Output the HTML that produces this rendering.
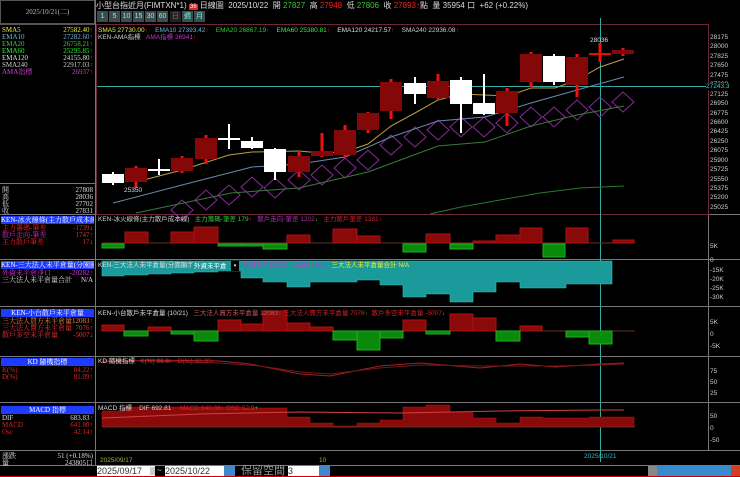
<!DOCTYPE html>
<html><head><meta charset="utf-8"><style>
*{margin:0;padding:0;box-sizing:border-box}
body{width:740px;height:477px;background:#000;overflow:hidden;position:relative;font-family:"Liberation Sans","Noto Sans CJK TC",sans-serif;color:#ddd}
.t{position:absolute;white-space:nowrap;font-size:7px;line-height:7px}
.s{font-family:"Liberation Serif","Noto Serif CJK SC",serif}
.hd{position:absolute;left:1px;width:93px;height:8px;background:#1e3cff;color:#fff;font-size:7px;line-height:8px;text-align:center;white-space:nowrap;overflow:hidden}
.r{position:absolute;left:2px;width:91px;font-size:7px;line-height:7px;white-space:nowrap}
.r b{float:right;font-weight:normal}
.btn{position:absolute;top:11px;height:11px;width:11px;background:#3c4b50;color:#7fd;font-size:7px;line-height:11px;text-align:center}
</style></head><body>
<svg width="740" height="477" style="position:absolute;left:0;top:0">
<!-- frames -->
<rect x="0.5" y="0.5" width="94" height="23" fill="none" stroke="#555"/>
<line x1="95.5" y1="0" x2="95.5" y2="466" stroke="#777"/>
<line x1="0" y1="24.5" x2="95" y2="24.5" stroke="#555"/>
<line x1="0" y1="183.5" x2="95" y2="183.5" stroke="#777"/>
<g stroke="#777">
<line x1="0" y1="214.5" x2="740" y2="214.5"/>
<line x1="0" y1="259.5" x2="740" y2="259.5"/>
<line x1="0" y1="306.5" x2="740" y2="306.5"/>
<line x1="0" y1="356.5" x2="740" y2="356.5"/>
<line x1="0" y1="402.5" x2="740" y2="402.5"/>
<line x1="0" y1="450.5" x2="740" y2="450.5"/>
<line x1="0" y1="465.5" x2="740" y2="465.5"/>
<line x1="708.5" y1="214" x2="708.5" y2="450"/>
</g>
<rect x="96.5" y="24.5" width="612" height="190" fill="none" stroke="#6a2838"/>
<line x1="0" y1="476.5" x2="740" y2="476.5" stroke="#c00"/>
<!-- crosshair -->
<line x1="600.5" y1="18" x2="600.5" y2="462" stroke="#3aa" stroke-width="1"/>
<line x1="97" y1="86.5" x2="708" y2="86.5" stroke="#3aa"/>
<!-- diamonds -->
<g fill="none" stroke="#8a2a9a" stroke-width="1">
<path d="M171 210l11-10 11 10-11 10z"/><path d="M195 200l11-10 11 10-11 10z"/><path d="M218 195l11-10 11 10-11 10z"/><path d="M241 187l11-10 11 10-11 10z"/><path d="M264 188l11-10 11 10-11 10z"/><path d="M288 180l11-10 11 10-11 10z"/><path d="M311 175l11-10 11 10-11 10z"/><path d="M334 168l11-10 11 10-11 10z"/><path d="M357 160l11-10 11 10-11 10z"/><path d="M380 145l11-10 11 10-11 10z"/><path d="M404 137l11-10 11 10-11 10z"/><path d="M427 130l11-10 11 10-11 10z"/><path d="M450 127l11-10 11 10-11 10z"/><path d="M473 127l11-10 11 10-11 10z"/><path d="M496 123l11-10 11 10-11 10z"/><path d="M520 117l11-10 11 10-11 10z"/><path d="M543 117l11-10 11 10-11 10z"/><path d="M566 110l11-10 11 10-11 10z"/><path d="M589 107l11-10 11 10-11 10z"/><path d="M612 102l11-10 11 10-11 10z"/>
</g>
<!-- MAs -->
<polyline fill="none" stroke="#2a7a2a" points="430,214 461,207 500,200 540,193 580,188 624,186"/>
<polyline fill="none" stroke="#3a7a3a" points="136,213 231,193 299,188 368,172 438,146 485,142 531,126 577,115 624,106"/>
<polyline fill="none" stroke="#6a8aa8" points="113,203 182,185 252,167 299,164 345,157 391,137 438,121 485,117 531,103 577,90 624,77"/>
<polyline fill="none" stroke="#b8a040" points="136,182 182,170 229,155 252,152 299,151 321,153 345,152 368,144 391,126 415,113 438,100 461,94 485,95 508,96 531,88 555,88 577,80 600,67 624,59"/>
<!-- candles -->
<g stroke-width="3" stroke="#f01010">
<line x1="136" y1="166" x2="136" y2="188"/><line x1="182" y1="156" x2="182" y2="173"/><line x1="206" y1="135" x2="206" y2="164"/><line x1="299" y1="151" x2="299" y2="177"/><line x1="322" y1="133" x2="322" y2="157"/><line x1="345" y1="125" x2="345" y2="157"/><line x1="368" y1="112" x2="368" y2="133"/><line x1="391" y1="79" x2="391" y2="119"/><line x1="438" y1="74" x2="438" y2="100"/><line x1="507" y1="88" x2="507" y2="126"/><line x1="531" y1="52" x2="531" y2="87"/><line x1="577" y1="54" x2="577" y2="97"/><line x1="600" y1="43" x2="600" y2="62"/><line x1="623" y1="48" x2="623" y2="56"/>
</g>
<g fill="#850808">
<rect x="125" y="168" width="22" height="14"/><rect x="171" y="158" width="22" height="13"/><rect x="195" y="138" width="22" height="21"/><rect x="288" y="156" width="22" height="16"/><rect x="311" y="151" width="22" height="5"/><rect x="334" y="130" width="22" height="25"/><rect x="357" y="113" width="22" height="17"/><rect x="380" y="82" width="22" height="29"/><rect x="427" y="81" width="22" height="17"/><rect x="496" y="91" width="22" height="22"/><rect x="520" y="54" width="22" height="28"/><rect x="566" y="57" width="22" height="28"/><rect x="589" y="53" width="22" height="2" fill="#e01010"/><rect x="612" y="50" width="22" height="4"/>
</g>
<g stroke-width="2" stroke="#fff">
<line x1="113" y1="172" x2="113" y2="185"/><line x1="159" y1="159" x2="159" y2="175"/><line x1="229" y1="124" x2="229" y2="149"/><line x1="252" y1="137" x2="252" y2="149"/><line x1="275" y1="148" x2="275" y2="180"/><line x1="415" y1="77" x2="415" y2="104"/><line x1="461" y1="77" x2="461" y2="133"/><line x1="484" y1="74" x2="484" y2="115"/><line x1="554" y1="54" x2="554" y2="85"/>
</g>
<g fill="#fff">
<rect x="102" y="174" width="22" height="9"/><rect x="148" y="169" width="22" height="2"/><rect x="218" y="138" width="22" height="2"/><rect x="241" y="141" width="22" height="7"/><rect x="264" y="149" width="22" height="23"/><rect x="404" y="83" width="22" height="11"/><rect x="450" y="80" width="22" height="24"/><rect x="473" y="103" width="22" height="11"/><rect x="543" y="56" width="22" height="26"/>
</g>
<!-- volume panel -->
<line x1="102" y1="243" x2="635" y2="243" stroke="#6a3020"/>
<g fill="#8a0a0a" stroke="#b01010">
<rect x="125" y="232" width="23" height="11"/><rect x="171" y="232" width="23" height="11"/><rect x="194" y="227" width="24" height="16"/><rect x="287" y="235" width="23" height="8"/><rect x="333" y="229" width="24" height="14"/><rect x="357" y="236" width="23" height="7"/><rect x="426" y="234" width="24" height="9"/><rect x="473" y="241" width="23" height="2"/><rect x="496" y="235" width="24" height="8"/><rect x="520" y="228" width="22" height="15"/><rect x="566" y="228" width="22" height="15"/><rect x="613" y="240" width="21" height="3"/>
</g>
<g fill="#0a8a0a" stroke="#20b020">
<rect x="102" y="244" width="22" height="4"/><rect x="218" y="244" width="23" height="2"/><rect x="241" y="244" width="22" height="2"/><rect x="263" y="244" width="24" height="5"/><rect x="403" y="244" width="23" height="8"/><rect x="450" y="244" width="23" height="5"/><rect x="543" y="244" width="22" height="13"/>
</g>
<!-- cyan panel -->
<g fill="#1a9a9a" stroke="#30c0c0" stroke-width=".6">
<path d="M102 261V276H124V275H148V274H171V273H194V272H218V271H241V278H263V282H287V287H310V282H333V282H357V280H380V285H403V297H426V294H450V302H473V292H496V282H520V288H543V288H566V284H589V284H612V261Z"/>
</g>
<!-- small panel -->
<line x1="102" y1="331" x2="635" y2="331" stroke="#6a3020"/>
<g fill="#8a0a0a" stroke="#b01010">
<rect x="102" y="325" width="22" height="6"/><rect x="148" y="327" width="23" height="4"/><rect x="218" y="320" width="23" height="11"/><rect x="241" y="324" width="22" height="7"/><rect x="263" y="311" width="24" height="20"/><rect x="287" y="323" width="23" height="8"/><rect x="310" y="327" width="23" height="4"/><rect x="403" y="320" width="23" height="11"/><rect x="450" y="314" width="23" height="17"/><rect x="473" y="318" width="23" height="13"/><rect x="520" y="326" width="22" height="5"/>
</g>
<g fill="#0a8a0a" stroke="#20b020">
<rect x="124" y="331" width="24" height="5"/><rect x="171" y="331" width="23" height="3"/><rect x="194" y="331" width="24" height="10"/><rect x="333" y="331" width="24" height="9"/><rect x="357" y="331" width="23" height="19"/><rect x="380" y="331" width="23" height="7"/><rect x="426" y="331" width="24" height="3"/><rect x="496" y="331" width="24" height="10"/><rect x="566" y="331" width="23" height="6"/><rect x="589" y="331" width="23" height="13"/>
</g>
<!-- KD -->
<polyline fill="none" stroke="#a02020" points="102,362 150,360 220,361 250,364 300,374 330,376 380,366 420,363 480,368 520,364 555,367 600,364 624,363"/>
<polyline fill="none" stroke="#701818" points="102,360 150,361 220,363 260,366 300,372 330,374 380,368 420,365 480,366 520,366 555,366 600,365 624,364"/>
<!-- MACD -->
<path d="M102 427V411H124V407H218V407H241V408H263V408H287V417H310V423H333V426H357V423H380V420H403V407H426V405H450V412H473V418H496V423H520V417H543V418H589V417H634V427Z" fill="#8a0a0a" stroke="#b01010" stroke-width=".6"/>
<polyline fill="none" stroke="#d04040" points="102,418 200,414 300,412 400,413 500,411 600,410 624,410"/>
<line x1="102" y1="427" x2="635" y2="427" stroke="#6a3020"/>
</svg>

<!-- left header -->
<div class="t s" style="left:0;top:9px;width:95px;text-align:center;color:#bbb">2025/10/21(二)</div>
<div class="r s" style="top:27px;color:#ee4">SMA5<b>27582.40<span style="color:#f22">↑</span></b></div>
<div class="r s" style="top:34px;color:#6ab4e0">EMA10<b>27282.60<span style="color:#f22">↑</span></b></div>
<div class="r s" style="top:41px;color:#3c3">EMA20<b>26758.21<span style="color:#f22">↑</span></b></div>
<div class="r s" style="top:48px;color:#3e3">EMA60<b>25295.85<span style="color:#f22">↑</span></b></div>
<div class="r s" style="top:55px;color:#ddd">EMA120<b>24155.80<span style="color:#f22">↑</span></b></div>
<div class="r s" style="top:62px;color:#ccc">SMA240<b>22917.03<span style="color:#f22">↑</span></b></div>
<div class="r s" style="top:69px;color:#d040d0">AMA指標<b>26937<span style="color:#f22">↑</span></b></div>
<div class="r s" style="top:187px;color:#ddd">開<b>27808</b></div>
<div class="r s" style="top:194px;color:#ddd">高<b>28036</b></div>
<div class="r s" style="top:201px;color:#ddd">低<b>27702</b></div>
<div class="r s" style="top:208px;color:#ddd">收<b>27831</b></div>
<div class="hd s" style="top:216px">KEN-冰火線條(主力散戶成本線)</div>
<div class="r s" style="top:225px;color:#e22">主力籌碼-筆差<b style="color:#e22">-1739<span style="color:#2c2">↓</span></b></div>
<div class="r s" style="top:232px;color:#c3c">散戶走向-筆差<b style="color:#c33">1747<span style="color:#f22">↑</span></b></div>
<div class="r s" style="top:239px;color:#e22">主力散戶筆差<b>17<span style="color:#2c2">↓</span></b></div>
<div class="hd s" style="top:261px">KEN-三大法人未平倉量(分園顯示)</div>
<div class="r s" style="top:270px;color:#d3d">外資未平倉淨口<b style="color:#d3d">-20282<span style="color:#f22">↑</span></b></div>
<div class="r s" style="top:277px;color:#ddd">三大法人未平倉量合計<b>N/A</b></div>
<div class="hd s" style="top:309px">KEN-小台散戶未平倉量</div>
<div class="r s" style="top:318px;color:#e84">三大法人買方未平倉量<b>12083<span style="color:#f22">↑</span></b></div>
<div class="r s" style="top:325px;color:#e33">三大法人賣方未平倉量<b>7076<span style="color:#f22">↑</span></b></div>
<div class="r s" style="top:332px;color:#e33">散戶多空未平倉量<b>-5007<span style="color:#2c2">↓</span></b></div>
<div class="hd s" style="top:358px">KD 隨機指標</div>
<div class="r s" style="top:367px;color:#d22">K(%)<b>84.22<span style="color:#f22">↑</span></b></div>
<div class="r s" style="top:374px;color:#d22">D(%)<b>81.09<span style="color:#f22">↑</span></b></div>
<div class="hd s" style="top:406px">MACD 指標</div>
<div class="r s" style="top:415px;color:#ddd">DIF<b>683.83<span style="color:#f22">↑</span></b></div>
<div class="r s" style="top:422px;color:#d22">MACD<b>641.80<span style="color:#f22">↑</span></b></div>
<div class="r s" style="top:429px;color:#d22">Osc<b>42.14<span style="color:#f22">↑</span></b></div>
<div class="r s" style="top:453px;color:#ddd">漲跌<b>51 (+0.18%)</b></div>
<div class="r s" style="top:460px;color:#ddd">量<b>243805口</b></div>

<!-- top bar -->
<div class="t" style="left:96px;top:2px;font-size:8px;line-height:8px;color:#ddd">小型台指近月(FIMTXN*1) <span style="background:#d22;color:#fff;font-size:6px;padding:0 1px">36</span> 日線圖 &nbsp;2025/10/22 &nbsp;開 <span style="color:#3c3">27827</span> &nbsp;高 <span style="color:#e22">27948</span> &nbsp;低 <span style="color:#3c3">27806</span> &nbsp;收 <span style="color:#e22">27893</span><span style="color:#e22">↑</span>點 &nbsp;量 35954 口 &nbsp;+62 (+0.22%)</div>
<div class="btn" style="left:97px">1</div><div class="btn" style="left:109px">5</div><div class="btn" style="left:121px">10</div><div class="btn" style="left:133px">15</div><div class="btn" style="left:145px">30</div><div class="btn" style="left:157px">60</div><div class="btn" style="left:170px;background:#222;color:#777">日</div><div class="btn" style="left:182px">週</div><div class="btn" style="left:194px">月</div>

<!-- main legend -->
<div class="t" style="left:98px;top:27px;font-size:6.5px"><span style="color:#ee4">SMA5 27730.00<span style="color:#f22">↑</span></span> &nbsp;&nbsp;&nbsp;<span style="color:#6ab4e0">EMA10 27393.42<span style="color:#f22">↑</span></span> &nbsp;&nbsp;&nbsp;<span style="color:#3c3">EMA20 26867.19<span style="color:#f22">↑</span></span> &nbsp;&nbsp;&nbsp;<span style="color:#3e3">EMA60 25380.81<span style="color:#f22">↑</span></span> &nbsp;&nbsp;&nbsp;<span style="color:#ddd">EMA120 24217.57<span style="color:#f22">↑</span></span> &nbsp;&nbsp;&nbsp;<span style="color:#ccc">SMA240 22936.08<span style="color:#f22">↑</span></span></div>
<div class="t" style="left:98px;top:34px;font-size:6.5px;color:#ccc">KEN-AMA指標 &nbsp;&nbsp;<span style="color:#c3c">AMA指標 26941<span style="color:#f22">↑</span></span></div>
<div class="t" style="left:590px;top:37px;font-size:6.5px;color:#ddd">28036</div>
<div class="t" style="left:124px;top:187px;font-size:6.5px;color:#ddd">25350</div>

<!-- price axis -->
<div class="t" style="left:710px;top:33px;font-size:6.5px;line-height:9.43px;color:#ccc">28175<br>28000<br>27825<br>27650<br>27475<br>27300<br>27125<br>26950<br>26775<br>26600<br>26425<br>26250<br>26075<br>25900<br>25725<br>25550<br>25375<br>25200<br>25025</div>
<div class="t" style="left:706px;top:83px;font-size:6.5px;color:#4cc;background:#000">27243.3</div>
<div class="t" style="left:710px;top:240px;font-size:6.5px;line-height:14px;color:#ccc">5K<br>0</div>
<div class="t" style="left:710px;top:266px;font-size:6.5px;line-height:9px;color:#ccc">-15K<br>-20K<br>-25K<br>-30K</div>
<div class="t" style="left:710px;top:317px;font-size:6.5px;line-height:12px;color:#ccc">5K<br>0<br>-5K</div>
<div class="t" style="left:710px;top:366px;font-size:6.5px;line-height:11px;color:#ccc">75<br>50<br>25</div>
<div class="t" style="left:710px;top:411px;font-size:6.5px;line-height:12px;color:#ccc">50<br>0<br>-50</div>

<!-- sub panel titles -->
<div class="t" style="left:98px;top:216px;font-size:6.5px;color:#ccc">KEN-冰火線條(主力散戶成本線) &nbsp;&nbsp;<span style="color:#3c3">主力籌碼-筆差 179</span><span style="color:#f22">↑</span> &nbsp;&nbsp;<span style="color:#a3a">散戶走向-筆差 1202</span><span style="color:#3c3">↓</span> &nbsp;&nbsp;<span style="color:#c22">主力散戶筆差 1381</span><span style="color:#f22">↑</span></div>
<div class="t" style="left:98px;top:262px;font-size:6.5px;color:#ddd">KEN-三大法人未平倉量(分園顯示)</div>
<div class="t" style="left:192px;top:263px;font-size:6.5px;line-height:8px;color:#fff;background:#1a9a9a;padding:0 2px">外資未平倉</div>
<div class="t" style="left:231px;top:261px;width:8px;height:10px;background:#000;color:#fff;font-size:5px;line-height:10px;text-align:center">▾</div>
<div class="t" style="left:243px;top:262px;font-size:6.5px"><span style="color:#c3c">外資未平倉淨口 -20282</span><span style="color:#f22">↑</span> <span style="color:#a3f">N/A</span> &nbsp;&nbsp;<span style="color:#ee3">三大法人未平倉量合計 N/A</span></div>
<div class="t" style="left:98px;top:310px;font-size:6.5px;color:#ddd">KEN-小台散戶未平倉量 (10/21) &nbsp;&nbsp;<span style="color:#c55">三大法人買方未平倉量 12083</span><span style="color:#f22">↑</span> <span style="color:#c22">三大法人賣方未平倉量 7076</span><span style="color:#3c3">↑</span> &nbsp;<span style="color:#c22">散戶多空未平倉量 -5007</span><span style="color:#3c3">↓</span></div>
<div class="t" style="left:98px;top:358px;font-size:6.5px;color:#ddd">KD 隨機指標 &nbsp;&nbsp;<span style="color:#c44">K(%) 86.6</span><span style="color:#f22">↑</span> &nbsp;&nbsp;<span style="color:#c22">D(%) 80.30</span><span style="color:#f22">↑</span></div>
<div class="t" style="left:98px;top:405px;font-size:6.5px;color:#ddd">MACD 指標 &nbsp;&nbsp;&nbsp;<span style="color:#ccc">DIF 692.81</span><span style="color:#f22">↑</span> &nbsp;&nbsp;<span style="color:#e22">MACD 640.08</span><span style="color:#f22">↑</span> <span style="color:#e22">OSC 52.9</span><span style="color:#3c3">+</span></div>

<!-- date axis -->
<div class="t" style="left:100px;top:457px;font-size:6.5px;color:#aa3">2025/09/17</div>
<div class="t" style="left:319px;top:457px;font-size:6.5px;color:#aa3">10</div>
<div class="t" style="left:584px;top:453px;font-size:6.5px;color:#3bb">2025/10/21</div>

<!-- toolbar -->
<div class="t" style="left:97px;top:466px;width:58px;height:10px;background:#fff;color:#333;font-size:9px;line-height:10px">2025/09/17</div>
<div class="t" style="left:150px;top:467px;width:5px;height:8px;background:#ccc"></div>
<div class="t" style="left:157px;top:467px;font-size:8px;color:#ccc">~</div>
<div class="t" style="left:165px;top:466px;width:59px;height:10px;background:#fff;color:#333;font-size:9px;line-height:10px">2025/10/22</div>
<div class="t" style="left:224px;top:466px;width:11px;height:10px;background:#48c"></div>
<div class="t" style="left:241px;top:465px;font-size:11px;line-height:12px;color:#999">保留空間</div>
<div class="t" style="left:288px;top:466px;width:31px;height:10px;background:#fff;color:#333;font-size:9px;line-height:10px">3</div>
<div class="t" style="left:319px;top:466px;width:11px;height:10px;background:#48c"></div>
<div class="t" style="left:648px;top:466px;width:9px;height:10px;background:#888"></div>
<div class="t" style="left:657px;top:466px;width:75px;height:10px;background:#3a8ad0"></div>
<div class="t" style="left:731px;top:466px;width:9px;height:10px;background:#d04020"></div>
</body></html>
